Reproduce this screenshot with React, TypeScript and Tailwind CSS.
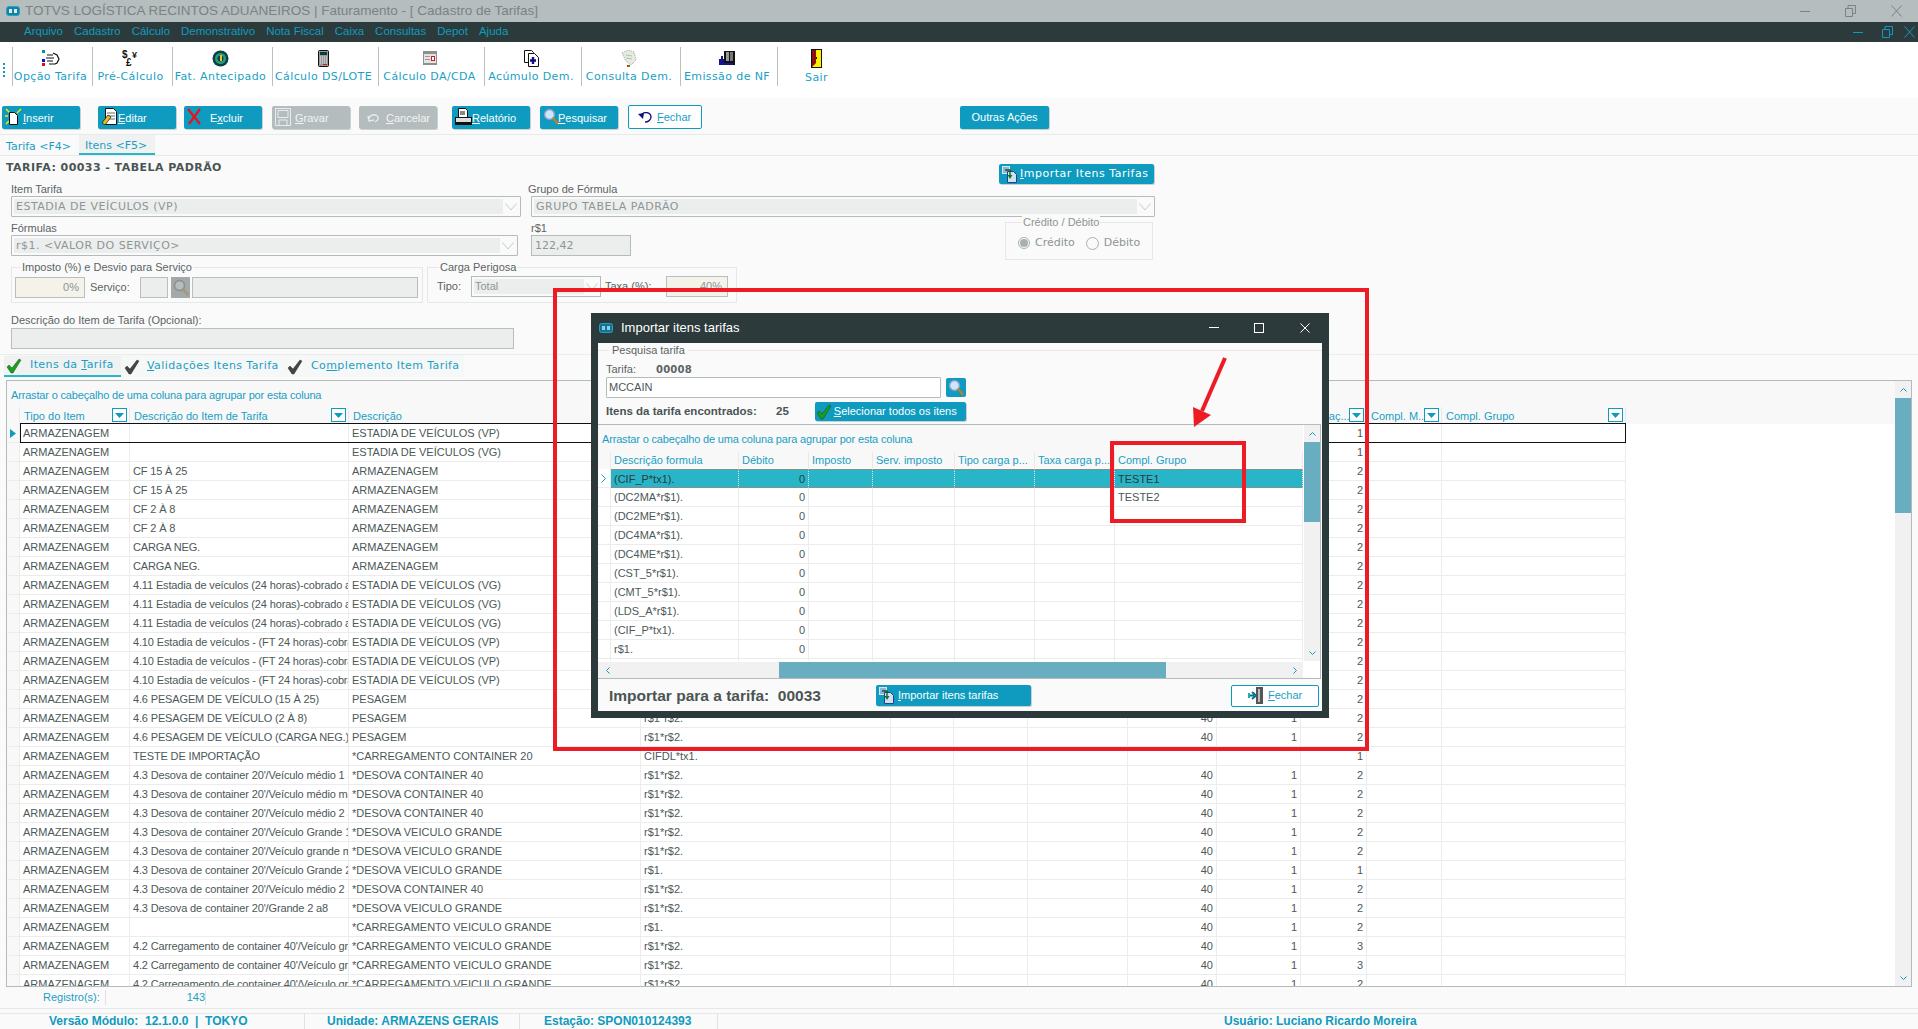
import React from 'react';

const verdana = "font-['DejaVu_Sans',sans-serif]";
const labelText = 'text-[11px] leading-[13px] text-[#5b6464] whitespace-nowrap';

const mainCols =
  'grid grid-cols-[13px_110px_219px_292px_250px_63px_74px_100px_89px_84px_66px_75px_184px]';
const modalCols = 'grid grid-cols-[13px_128px_70px_64px_82px_80px_80px_188px]';

type Row = [string, string, string, string, string, string];

// values under the dialog are not visible in the screen, so those cells stay empty
const rows: Row[] = [
  ['', 'ESTADIA DE VEÍCULOS (VP)', '', '', '', '1'],
  ['', 'ESTADIA DE VEÍCULOS (VG)', '', '', '', '1'],
  ['CF 15 À 25', 'ARMAZENAGEM', '', '', '', '2'],
  ['CF 15 À 25', 'ARMAZENAGEM', '', '', '', '2'],
  ['CF 2 À 8', 'ARMAZENAGEM', '', '', '', '2'],
  ['CF 2 À 8', 'ARMAZENAGEM', '', '', '', '2'],
  ['CARGA NEG.', 'ARMAZENAGEM', '', '', '', '2'],
  ['CARGA NEG.', 'ARMAZENAGEM', '', '', '', '2'],
  ['4.11 Estadia de veículos (24 horas)-cobrado a cada', 'ESTADIA DE VEÍCULOS (VG)', '', '', '', '2'],
  ['4.11 Estadia de veículos (24 horas)-cobrado a cada', 'ESTADIA DE VEÍCULOS (VG)', '', '', '', '2'],
  ['4.11 Estadia de veículos (24 horas)-cobrado a cada', 'ESTADIA DE VEÍCULOS (VG)', '', '', '', '2'],
  ['4.10 Estadia de veículos - (FT 24 horas)-cobrado a', 'ESTADIA DE VEÍCULOS (VP)', '', '', '', '2'],
  ['4.10 Estadia de veículos - (FT 24 horas)-cobrado a', 'ESTADIA DE VEÍCULOS (VP)', '', '', '', '2'],
  ['4.10 Estadia de veículos - (FT 24 horas)-cobrado a', 'ESTADIA DE VEÍCULOS (VP)', '', '', '', '2'],
  ['4.6 PESAGEM DE VEÍCULO (15 À 25)', 'PESAGEM', '', '', '', '2'],
  ['4.6 PESAGEM DE VEÍCULO (2 À 8)', 'PESAGEM', 'r$1*r$2.', '40', '1', '2'],
  ['4.6 PESAGEM DE VEÍCULO (CARGA NEG.)', 'PESAGEM', 'r$1*r$2.', '40', '1', '2'],
  ['TESTE DE IMPORTAÇÃO', '*CARREGAMENTO CONTAINER 20', 'CIFDL*tx1.', '', '', '1'],
  ["4.3 Desova de container 20'/Veículo médio 1 a 8", '*DESOVA CONTAINER 40', 'r$1*r$2.', '40', '1', '2'],
  ["4.3 Desova de container 20'/Veículo médio maior", '*DESOVA CONTAINER 40', 'r$1*r$2.', '40', '1', '2'],
  ["4.3 Desova de container 20'/Veículo médio 2 a 8", '*DESOVA CONTAINER 40', 'r$1*r$2.', '40', '1', '2'],
  ["4.3 Desova de container 20'/Veículo Grande 1 a 8", '*DESOVA VEICULO GRANDE', 'r$1*r$2.', '40', '1', '2'],
  ["4.3 Desova de container 20'/Veículo grande maior", '*DESOVA VEICULO GRANDE', 'r$1*r$2.', '40', '1', '2'],
  ["4.3 Desova de container 20'/Veículo Grande 2 a 8", '*DESOVA VEICULO GRANDE', 'r$1.', '40', '1', '1'],
  ["4.3 Desova de container 20'/Veículo médio 2 a 8", '*DESOVA CONTAINER 40', 'r$1*r$2.', '40', '1', '2'],
  ["4.3 Desova de container 20'/Grande 2 a8", '*DESOVA VEICULO GRANDE', 'r$1*r$2.', '40', '1', '2'],
  ['', '*CARREGAMENTO VEICULO GRANDE', 'r$1.', '40', '1', '2'],
  ["4.2 Carregamento de container 40'/Veículo grande", '*CARREGAMENTO VEICULO GRANDE', 'r$1*r$2.', '40', '1', '3'],
  ["4.2 Carregamento de container 40'/Veículo grande", '*CARREGAMENTO VEICULO GRANDE', 'r$1*r$2.', '40', '1', '3'],
  ["4.2 Carregamento de container 40'/Veículo grande", '*CARREGAMENTO VEICULO GRANDE', 'r$1*r$2.', '40', '1', '2'],
];

const modalRows = [
  ['(CIF_P*tx1).', 'TESTE1'],
  ['(DC2MA*r$1).', 'TESTE2'],
  ['(DC2ME*r$1).', ''],
  ['(DC4MA*r$1).', ''],
  ['(DC4ME*r$1).', ''],
  ['(CST_5*r$1).', ''],
  ['(CMT_5*r$1).', ''],
  ['(LDS_A*r$1).', ''],
  ['(CIF_P*tx1).', ''],
  ['r$1.', ''],
  ['', ''],
];

function Underlined({ before = '', letter, after }: { before?: string; letter: string; after: string }) {
  return (
    <span className="whitespace-nowrap">
      {before}
      <span className="underline">{letter}</span>
      {after}
    </span>
  );
}

function HandIcon() {
  return (
    <svg width="18" height="16" viewBox="0 0 18 16">
      <rect x="0" y="0" width="3" height="3" fill="#0f8f8f" />
      <rect x="0" y="9" width="3" height="3" fill="#1010e0" />
      <rect x="0" y="13" width="3" height="3" fill="#e01010" />
      <path d="M5 5h6M4 8h8M5 11h6M7 14h6M11 3l4 2 2 4-2 4-2 1" fill="none" stroke="#111" strokeWidth="1.2" />
    </svg>
  );
}

function CurrencyIcon() {
  return (
    <svg width="17" height="17" viewBox="0 0 17 17">
      <text x="0" y="8" fontSize="10" fontWeight="700" fontFamily="Liberation Sans" fill="#111">$</text>
      <text x="10" y="8" fontSize="9" fontWeight="700" fontFamily="Liberation Sans" fill="#111">¥</text>
      <text x="4" y="16" fontSize="10" fontWeight="700" fontFamily="Liberation Sans" fill="#111">£</text>
    </svg>
  );
}

function DiscIcon() {
  return (
    <svg width="17" height="17" viewBox="0 0 17 17">
      <circle cx="8.5" cy="8.5" r="8" fill="#0c3f4a" />
      <circle cx="8.5" cy="8.5" r="5.5" fill="#2a9d70" />
      <circle cx="8.5" cy="8.5" r="3" fill="#0c3f4a" />
      <rect x="8" y="5" width="2" height="6" fill="#e8c23a" />
    </svg>
  );
}

function CalculatorIcon() {
  return (
    <svg width="11" height="17" viewBox="0 0 11 17">
      <rect x="0.5" y="0.5" width="10" height="16" rx="1" fill="#9a9a9a" stroke="#111" />
      <rect x="2" y="2" width="7" height="3" fill="#0b3a40" />
      <path d="M2 7h7M2 9h7M2 11h7M2 13h7" stroke="#e6e6e6" strokeDasharray="1 1" />
      <rect x="5" y="14" width="4" height="1" fill="#d02020" />
    </svg>
  );
}

function WindowIcon() {
  return (
    <svg width="14" height="14" viewBox="0 0 14 14">
      <rect x="0" y="0" width="14" height="14" fill="#8f8f8f" />
      <rect x="1" y="3" width="12" height="9" fill="#e4e4e4" />
      <rect x="2" y="5" width="5" height="1" fill="#9a9a9a" />
      <rect x="2" y="8" width="5" height="1" fill="#9a9a9a" />
      <rect x="8" y="5" width="4" height="5" fill="#d81818" />
      <rect x="9" y="6" width="2" height="3" fill="#fff" />
    </svg>
  );
}

function DocsPlusIcon() {
  return (
    <svg width="15" height="17" viewBox="0 0 15 17">
      <path d="M0.5 0.5h7l2 2v10h-9z" fill="#fff" stroke="#111" />
      <path d="M4.5 3.5h6l4 4v9h-10z" fill="#fff" stroke="#111" />
      <path d="M9 7v7M6 10.5h6" stroke="#101080" strokeWidth="2.4" />
    </svg>
  );
}

function NotesIcon() {
  return (
    <svg width="16" height="17" viewBox="0 0 16 17">
      <path d="M1 3l6-3 6 2 2 8-5 5-5-4z" fill="#e7ece2" stroke="#9aa39a" strokeDasharray="1 1" />
      <path d="M5 5l6 1M5 8l6 1" stroke="#a9c4a9" />
      <rect x="6" y="15" width="3" height="2" fill="#a05a10" />
    </svg>
  );
}

function TruckIcon() {
  return (
    <svg width="16" height="15" viewBox="0 0 16 15">
      <rect x="5" y="0" width="11" height="14" fill="#111" />
      <rect x="7" y="1" width="3" height="9" fill="#9a9a9a" />
      <rect x="11" y="1" width="3" height="9" fill="#777" />
      <rect x="0" y="8" width="5" height="6" fill="#14148c" />
      <rect x="2" y="5" width="2" height="4" fill="#14148c" />
      <rect x="5" y="12" width="9" height="2" fill="#14148c" />
    </svg>
  );
}

function DoorIcon() {
  return (
    <svg width="11" height="19" viewBox="0 0 11 19">
      <rect x="0.5" y="0.5" width="10" height="18" fill="#ffee00" stroke="#111" />
      <path d="M1 1h4v13l-4 4z" fill="#8a1010" />
      <rect x="5" y="8" width="1" height="2" fill="#111" />
    </svg>
  );
}

function ImportIcon() {
  return (
    <svg width="16" height="17" viewBox="0 0 16 17">
      <rect x="0.500" y="0.500" width="7" height="7" fill="#8fb4dc" stroke="#d8e6f4" />
      <path d="M5.500 5.500h6l3 3v8h-9z" fill="#cfe0f2" stroke="#27408b" />
      <path d="M3 4h5v6" fill="none" stroke="#0d5c1a" strokeWidth="1.300" />
      <path d="M5.500 9h5l-2.500 4z" fill="#0d7a20" />
    </svg>
  );
}

function CheckIcon({ color, size = 16 }: { color: string; size?: number }) {
  return (
    <svg width={size} height={size} viewBox="0 0 16 16">
      <path d="M1 9l2-2 3 3 7-9 2 1-8 13h-2z" fill={color} stroke="#222" strokeWidth="0.4" />
    </svg>
  );
}

function SearchGlass({ faded = false }: { faded?: boolean }) {
  return (
    <svg width="16" height="17" viewBox="0 0 16 17">
      <circle cx="6.500" cy="6.500" r="5" fill={faded ? '#b7bdbd' : '#cfe6fa'} stroke={faded ? '#8a8f8f' : '#7fa0c0'} strokeWidth="1.500" />
      <path d="M10 10l5 6" stroke={faded ? '#a89a6a' : '#b8812c'} strokeWidth="2.500" />
    </svg>
  );
}

function ExitIcon() {
  return (
    <svg width="17" height="17" viewBox="0 0 17 17">
      <rect x="8" y="0" width="7" height="17" fill="#555" />
      <rect x="10" y="2" width="2" height="13" fill="#bcbcbc" />
      <path d="M1 8.500h5M4 5l4 3.500-4 3.500" fill="none" stroke="#0a6f8a" strokeWidth="2" />
      <rect x="0" y="6" width="2" height="5" fill="#18b0b0" />
    </svg>
  );
}

function ActionButton({
  left,
  width,
  textLeft,
  icon,
  muted,
  children,
}: {
  left: number;
  width: number;
  textLeft: number;
  icon: React.ReactNode;
  muted?: boolean;
  children: React.ReactNode;
}) {
  return (
    <div
      className={`relative h-[23px] flex items-center rounded-[2px] text-[11px] shadow-[1px_1px_0_#c9d0d0] ${
        muted ? 'bg-[#b5bcbd] text-[#f2f4f4]' : 'bg-[#0e9bbf] text-white'
      }`}
      style={{ marginLeft: left, width }}
    >
      <span className="absolute left-[3px] top-[2px]">{icon}</span>
      <span className="absolute top-[4px]" style={{ left: textLeft }}>
        {children}
      </span>
    </div>
  );
}

function ToolItem({ width, icon, label }: { width: number; icon: React.ReactNode; label: string }) {
  return (
    <div className="flex flex-col items-center h-[39px] pr-[4px] border-l border-[#b9c0c0] shrink-0" style={{ width }}>
      <div className="h-[21px] flex items-center justify-center pt-[2px]">{icon}</div>
      <div className={`${verdana} text-[11px] tracking-[0.4px] leading-[19px] text-[#1a9fc4] whitespace-nowrap`}>{label}</div>
    </div>
  );
}

function Chevron() {
  return (
    <svg width="12" height="8" viewBox="0 0 12 8" className="shrink-0">
      <path d="M0.500 0.500L6 7L11.500 0.500" fill="none" stroke="#c5cbcb" />
    </svg>
  );
}

function SelectBox({ text, width }: { text: string; width: string }) {
  return (
    <div className={`${width} h-[21px] flex items-center border border-[#b4bbbb] rounded-[1px] bg-[#fafafa] p-[2px] pr-[3px]`}>
      <div className={`flex-1 h-[15px] bg-[#eceeee] pl-[2px] ${verdana} text-[11px] tracking-[0.5px] leading-[15px] text-[#8d9595] whitespace-nowrap overflow-hidden`}>
        {text}
      </div>
      <span className="ml-[2px]">
        <Chevron />
      </span>
    </div>
  );
}

function FilterButton() {
  return (
    <span className="absolute right-[2px] top-[1px] w-[15px] h-[14px] border border-[#0e9bbf] bg-white flex items-center justify-center">
      <svg width="9" height="5" viewBox="0 0 9 5">
        <path d="M0 0h9L4.500 5z" fill="#0e9bbf" />
      </svg>
    </span>
  );
}

function HeadCell({ text, filter, drop }: { text: string; filter?: boolean; drop?: boolean }) {
  return (
    <div
      className={`relative h-[17px] border-r border-[#e8eaea] text-[11px] leading-[17px] text-[#1a9fc4] whitespace-nowrap overflow-hidden bg-[#f8f8f8] ${
        drop ? 'pl-[4px] pt-px' : 'pl-[3px]'
      }`}
    >
      {text}
      {filter && <FilterButton />}
    </div>
  );
}

function Cell({ text, right, selected, tight }: { text?: string; right?: boolean; selected?: boolean; tight?: boolean }) {
  return (
    <div
      className={`h-[19px] border-r border-[#ececec] px-[3px] text-[11px] leading-[18px] whitespace-nowrap overflow-hidden ${
        right ? 'text-right' : ''
      } ${tight ? 'tracking-[-0.15px]' : ''} ${
        selected ? 'bg-[#29b5c8] text-[#2e3a3c] border-y border-dotted border-y-[#d86a60]' : 'border-b text-[#4d5858]'
      }`}
    >
      {text}
    </div>
  );
}

function VScroll({ thumb, height }: { thumb: string; height: string }) {
  return (
    <div className={`${height} w-[16px] shrink-0 bg-[#f1f1f1] flex flex-col items-center`}>
      <svg width="7" height="4" viewBox="0 0 7 4" className="mt-[7px] mb-[6px] shrink-0">
        <path d="M0.500 3.500L3.500 0.500L6.500 3.500" fill="none" stroke="#0e9bbf" />
      </svg>
      <div className={`${thumb} w-[16px] bg-[#68aec0] shrink-0`} />
      <svg width="7" height="4" viewBox="0 0 7 4" className="mt-auto mb-[6px] shrink-0">
        <path d="M0.500 0.500L3.500 3.500L6.500 0.500" fill="none" stroke="#0e9bbf" />
      </svg>
    </div>
  );
}

function ImportModal() {
  return (
    <div className="absolute left-[591px] top-[313px] w-[738px] h-[405px] bg-[#2d3a3c] flex flex-col">
      <div className="h-[30px] flex items-center shrink-0 pl-[8px]">
        <svg width="14" height="10" viewBox="0 0 14 10">
          <rect x="0.500" y="0.500" width="13" height="9" rx="2" fill="#1d6f8c" stroke="#1aa5cf" />
          <rect x="3" y="3" width="3" height="4" fill="#7fd4ee" />
          <rect x="8" y="3" width="3" height="4" fill="#7fd4ee" />
        </svg>
        <span className="ml-[8px] text-[13px] text-white whitespace-nowrap">Importar itens tarifas</span>
        <svg width="10" height="2" viewBox="0 0 10 2" className="ml-[469px]">
          <rect width="10" height="1" fill="#fff" />
        </svg>
        <span className="ml-[35px] w-[10px] h-[10px] border border-white" />
        <svg width="10" height="10" viewBox="0 0 10 10" className="ml-[36px]">
          <path d="M0.500 0.500l9 9M9.500 0.500l-9 9" stroke="#fff" />
        </svg>
      </div>
      <div className="mx-[7px] w-[724px] h-[368px] bg-[#fafafa] flex flex-col">
        {/* Pesquisa tarifa */}
        <div className="h-[15px] flex items-center shrink-0">
          <span className="w-[11px] h-px bg-[#e6e8e8]" />
          <span className="px-[3px] text-[11px] text-[#5b6464] whitespace-nowrap">Pesquisa tarifa</span>
          <span className="flex-1 h-px bg-[#e6e8e8]" />
        </div>
        <div className="mt-[3px] h-[16px] pl-[8px] flex items-center text-[11px] text-[#5b6464] shrink-0">
          <span className="w-[50px]">Tarifa:</span>
          <span className={`${verdana} font-bold text-[10px] tracking-[0.2px]`}>00008</span>
        </div>
        <div className="pl-[8px] flex shrink-0">
          <div className="w-[335px] h-[21px] border border-[#b4bbbb] rounded-[1px] bg-white pl-[2px] text-[11px] leading-[19px] text-[#4d5858]">
            MCCAIN
          </div>
          <div className="ml-[5px] mt-px w-[20px] h-[19px] rounded-[2px] bg-[#0e9bbf] flex items-center justify-center">
            <SearchGlass />
          </div>
        </div>
        <div className="mt-[4px] h-[19px] pl-[8px] flex items-center shrink-0">
          <span className="w-[170px] font-bold text-[11.500px] text-[#4a5454] whitespace-nowrap">
            Itens da tarifa encontrados:
          </span>
          <span className="font-bold text-[11.500px] text-[#4a5454]">25</span>
          <div className="ml-[26px] w-[151px] h-[19px] rounded-[2px] bg-[#0e9bbf] shadow-[1px_1px_0_#c9d0d0] text-[11px] text-white flex items-center pl-px">
            <CheckIcon color="#16a016" />
            <span className="ml-[2px]">
              <Underlined letter="S" after="elecionar todos os itens" />
            </span>
          </div>
        </div>
        {/* grid */}
        <div className="mt-[3px] w-[723px] h-[255px] border-y border-r border-[#b4bbbb] bg-white flex flex-col shrink-0">
          <div className="flex h-[236px] shrink-0">
            <div className="w-[705px] flex flex-col overflow-hidden shrink-0">
              <div className="h-[27px] shrink-0 bg-[#f8f8f8] pl-[4px] pt-[8px] text-[11px] tracking-[-0.17px] leading-[13px] text-[#1a9fc4] whitespace-nowrap">
                Arrastar o cabeçalho de uma coluna para agrupar por esta coluna
              </div>
              <div className={`${modalCols} shrink-0`}>
                <HeadCell text="" />
                <HeadCell text="Descrição formula" />
                <HeadCell text="Débito" />
                <HeadCell text="Imposto" />
                <HeadCell text="Serv. imposto" />
                <HeadCell text="Tipo carga p..." />
                <HeadCell text="Taxa carga p..." />
                <HeadCell text="Compl. Grupo" />
              </div>
              {modalRows.map((row, i) => (
                <div key={i} className={`${modalCols} shrink-0`}>
                  <div className="h-[19px] border-r border-b border-[#ececec] flex items-center pl-[3px]">
                    {i === 0 && (
                      <svg width="5" height="9" viewBox="0 0 5 9">
                        <path d="M0.500 0.500L4.500 4.500L0.500 8.500" fill="none" stroke="#0e9bbf" />
                      </svg>
                    )}
                  </div>
                  <Cell text={row[0]} selected={i === 0} />
                  <Cell text={row[0] ? '0' : ''} right selected={i === 0} />
                  <Cell selected={i === 0} />
                  <Cell selected={i === 0} />
                  <Cell selected={i === 0} />
                  <Cell selected={i === 0} />
                  <Cell text={row[1]} selected={i === 0} />
                </div>
              ))}
            </div>
            <div className="ml-px">
              <VScroll height="h-[236px]" thumb="h-[80px]" />
            </div>
          </div>
          <div className="mt-px h-[16px] w-[705px] bg-[#f1f1f1] flex items-center shrink-0">
            <svg width="4" height="7" viewBox="0 0 4 7" className="ml-[8px] shrink-0">
              <path d="M3.500 0.500L0.500 3.500L3.500 6.500" fill="none" stroke="#0e9bbf" />
            </svg>
            <div className="ml-[169px] w-[387px] h-[16px] bg-[#68aec0] shrink-0" />
            <svg width="4" height="7" viewBox="0 0 4 7" className="ml-[127px] shrink-0">
              <path d="M0.500 0.500L3.500 3.500L0.500 6.500" fill="none" stroke="#0e9bbf" />
            </svg>
          </div>
        </div>
        {/* footer */}
        <div className="flex-1 flex items-center pl-[11px] pt-px">
          <span className="w-[267px] font-bold text-[15.500px] text-[#4a5454] whitespace-nowrap">
            Importar para a tarifa:&nbsp; 00033
          </span>
          <div className="w-[155px] h-[21px] rounded-[2px] bg-[#0e9bbf] shadow-[1px_1px_0_#c9d0d0] flex items-center pl-[3px] text-[11px] text-white">
            <ImportIcon />
            <span className="ml-[3px]">
              <Underlined letter="I" after="mportar itens tarifas" />
            </span>
          </div>
          <div className="ml-[200px] w-[88px] h-[22px] rounded-[2px] border border-[#0e9bbf] bg-white flex items-center pl-[16px] text-[11px] text-[#1a9fc4]">
            <ExitIcon />
            <span className="ml-[3px]">
              <Underlined letter="F" after="echar" />
            </span>
          </div>
        </div>
      </div>
    </div>
  );
}

export default function App() {
  return (
    <div className="relative w-[1918px] h-[1029px] overflow-hidden bg-[#fafafa] flex flex-col font-['Liberation_Sans',sans-serif]">
      {/* Title bar */}
      <div className="h-[22px] bg-[#b5bdbe] flex items-center shrink-0 pl-[6px]">
        <svg width="14" height="10" viewBox="0 0 14 10">
          <rect x="0.500" y="0.500" width="13" height="9" rx="2.500" fill="#1d7f9c" stroke="#1aa5cf" />
          <rect x="3" y="3" width="3" height="4" fill="#d6eef5" />
          <rect x="8" y="3" width="3" height="4" fill="#d6eef5" />
        </svg>
        <span className="ml-[5px] text-[13.500px] text-[#7b8383] whitespace-nowrap">
          TOTVS LOGÍSTICA RECINTOS ADUANEIROS | Faturamento - [ Cadastro de Tarifas]
        </span>
        <span className="ml-auto w-[10px] h-px bg-[#7b8383]" />
        <svg width="11" height="12" viewBox="0 0 11 12" className="ml-[35px]">
          <path d="M0.500 3.500h7v8h-7zM3 3.500v-3h7.500v8h-3" fill="none" stroke="#7b8383" />
        </svg>
        <svg width="11" height="12" viewBox="0 0 11 12" className="ml-[35px] mr-[16px]">
          <path d="M0.500 0.500l10 11M10.500 0.500l-10 11" stroke="#7b8383" />
        </svg>
      </div>

      {/* Menu bar */}
      <div className="h-[20px] bg-[#2d3a3c] flex items-center shrink-0 pl-[24px] text-[11.500px] text-[#0e9bbf] gap-[11px]">
        <span>Arquivo</span>
        <span>Cadastro</span>
        <span>Cálculo</span>
        <span>Demonstrativo</span>
        <span>Nota Fiscal</span>
        <span>Caixa</span>
        <span>Consultas</span>
        <span>Depot</span>
        <span>Ajuda</span>
        <span className="ml-auto w-[10px] h-px bg-[#0e9bbf]" />
        <svg width="11" height="12" viewBox="0 0 11 12" className="ml-[8px]">
          <path d="M0.500 3.500h7v8h-7zM3 3.500v-3h7.500v8h-3" fill="none" stroke="#0e9bbf" />
        </svg>
        <svg width="11" height="12" viewBox="0 0 11 12" className="mr-[3px]">
          <path d="M0.500 0.500l10 11M10.500 0.500l-10 11" stroke="#0e9bbf" />
        </svg>
      </div>

      {/* Toolbar */}
      <div className="h-[56px] bg-white flex shrink-0 pt-[5px]">
        <div className="w-[12px] pl-[3px] pt-[16px] shrink-0">
          <div className="w-[2px] h-[14px] border-l-2 border-dotted border-[#0e9bbf]" />
        </div>
        <ToolItem width={80} icon={<HandIcon />} label="Opção Tarifa" />
        <ToolItem width={80} icon={<CurrencyIcon />} label="Pré-Cálculo" />
        <ToolItem width={100} icon={<DiscIcon />} label="Fat. Antecipado" />
        <ToolItem width={106} icon={<CalculatorIcon />} label="Cálculo DS/LOTE" />
        <ToolItem width={106} icon={<WindowIcon />} label="Cálculo DA/CDA" />
        <ToolItem width={97} icon={<DocsPlusIcon />} label="Acúmulo Dem." />
        <ToolItem width={99} icon={<NotesIcon />} label="Consulta Dem." />
        <ToolItem width={97} icon={<TruckIcon />} label="Emissão de NF" />
        <ToolItem width={82} icon={<DoorIcon />} label="Sair" />
      </div>

      {/* Action buttons */}
      <div className="h-[37px] border-b border-[#e8eaea] flex pt-[8px] shrink-0">
        <ActionButton left={2} width={78} textLeft={21} icon={
          <svg width="17" height="18" viewBox="0 0 17 18">
            <path d="M1 1l4 4M16 1l-4 4M1 16l3-3M0 8h3" stroke="#ffe600" strokeWidth="1.500" />
            <path d="M4.500 4.500h5l3 3v9h-8z" fill="#fff" stroke="#111" />
          </svg>
        }>
          <Underlined letter="I" after="nserir" />
        </ActionButton>
        <ActionButton left={18} width={78} textLeft={20} icon={
          <svg width="17" height="18" viewBox="0 0 17 18">
            <path d="M4.500 0.500h8l3 3v13h-11z" fill="#fff" stroke="#111" />
            <path d="M6 5h8M6 8h8M6 11h8" stroke="#666" />
            <path d="M1 15l6-8 3 2-6 8z" fill="#e8c21a" stroke="#111" strokeWidth="0.700" />
          </svg>
        }>
          <Underlined letter="E" after="ditar" />
        </ActionButton>
        <ActionButton left={8} width={78} textLeft={26} icon={
          <svg width="15" height="18" viewBox="0 0 15 18">
            <path d="M1 1l12 15M13 1L2 16" stroke="#e5141c" strokeWidth="2.200" />
          </svg>
        }>
          <Underlined before="E" letter="x" after="cluir" />
        </ActionButton>
        <ActionButton left={10} width={78} muted textLeft={23} icon={
          <svg width="16" height="18" viewBox="0 0 16 18">
            <path d="M0.500 0.500h15v17h-15z" fill="none" stroke="#e8ecec" />
            <path d="M3 2.500h10v7H3zM4 17v-5h8v5" fill="none" stroke="#e8ecec" />
          </svg>
        }>
          <Underlined letter="G" after="ravar" />
        </ActionButton>
        <ActionButton left={9} width={78} muted textLeft={27} icon={
          <svg width="18" height="18" viewBox="0 0 18 18">
            <path d="M5 12c0-4 7-6 9-2 1 3-1 4-3 5M4 9l1 5 5-1" fill="none" stroke="#e8ecec" strokeWidth="1.300" transform="translate(2 -1)" />
          </svg>
        }>
          <Underlined letter="C" after="ancelar" />
        </ActionButton>
        <ActionButton left={15} width={78} textLeft={20} icon={
          <svg width="17" height="18" viewBox="0 0 17 18">
            <path d="M3.500 0.500h7l2 2v7h-9z" fill="#fff" stroke="#111" />
            <path d="M5 4h5M5 6h5" stroke="#111" />
            <rect x="0.500" y="9.500" width="16" height="5" fill="#ddd" stroke="#111" />
            <rect x="0" y="15" width="17" height="2" fill="#111" />
          </svg>
        }>
          <Underlined letter="R" after="elatório" />
        </ActionButton>
        <ActionButton left={10} width={78} textLeft={18} icon={<SearchGlass />}>
          <Underlined letter="P" after="esquisar" />
        </ActionButton>
        <div className="ml-[10px] w-[74px] h-[24px] -mt-px rounded-[2px] border border-[#0e9bbf] bg-white flex items-center pl-[9px] text-[11px] text-[#1a9fc4]">
          <svg width="15" height="11" viewBox="0 0 15 11">
            <path d="M4 2c4-3 9-1 9 3 0 3-3 5-6 5" fill="none" stroke="#101080" strokeWidth="1.300" />
            <path d="M0 2l6-1-1 6z" fill="#101080" />
          </svg>
          <span className="ml-[4px]">
            <Underlined letter="F" after="echar" />
          </span>
        </div>
        <div className="ml-[258px] w-[89px] h-[23px] rounded-[2px] bg-[#0e9bbf] shadow-[1px_1px_0_#c9d0d0] flex items-center justify-center text-[11px] text-white">
          Outras Ações
        </div>
      </div>

      {/* Page tabs */}
      <div className={`h-[21px] border-b border-[#e8eaea] flex shrink-0 ${verdana} text-[11px] text-[#1a9fc4]`}>
        <div className="w-[79px] pl-[6px] pt-px leading-[22px]">Tarifa &lt;F4&gt;</div>
        <div className="w-[76px] bg-[#f0f1f1] border-b-2 border-[#2bb5c8] pl-[6px] pt-px leading-[19px]">Itens &lt;F5&gt;</div>
      </div>

      {/* Form */}
      <div className="h-[199px] border-b border-[#ececec] shrink-0 flex flex-col">
        <div className="h-[27px] w-[1154px] flex justify-between items-start pt-[8px] pl-[6px] shrink-0">
          <span className={`${verdana} mt-px font-bold text-[11px] tracking-[0.45px] leading-[6px] text-[#4a5454]`}>
            TARIFA: 00033 - TABELA PADRÃO
          </span>
          <div className={`h-[20px] w-[155px] rounded-[2px] bg-[#0e9bbf] shadow-[1px_1px_0_#c9d0d0] flex items-center pl-[3px] ${verdana} text-[11px] tracking-[0.5px] text-white`}>
            <ImportIcon />
            <span className="ml-[2px] pt-px">
              <Underlined letter="I" after="mportar Itens Tarifas" />
            </span>
          </div>
        </div>
        <div className="flex shrink-0">
          <div className="ml-[11px] w-[510px]">
            <div className={labelText}>Item Tarifa</div>
            <SelectBox width="w-[510px]" text="ESTADIA DE VEÍCULOS (VP)" />
          </div>
          <div className="ml-[10px] w-[624px]">
            <div className={`${labelText} -ml-[3px]`}>Grupo de Fórmula</div>
            <SelectBox width="w-[624px]" text="GRUPO TABELA PADRÃO" />
          </div>
        </div>
        <div className="flex mt-[5px] shrink-0">
          <div className="ml-[11px] w-[507px]">
            <div className={labelText}>Fórmulas</div>
            <SelectBox width="w-[507px]" text="r$1. <VALOR DO SERVIÇO>" />
          </div>
          <div className="ml-[13px] w-[100px]">
            <div className={labelText}>r$1</div>
            <div className={`h-[21px] border border-[#b4bbbb] bg-[#eceeee] pl-[3px] ${verdana} text-[11px] leading-[19px] text-[#8d9595]`}>
              122,42
            </div>
          </div>
          <div className="relative ml-[374px] -mb-[4px] w-[148px] h-[38px] border border-[#e6e8e8] flex items-center text-[11px] text-[#8d9595]">
            <span className="absolute left-[16px] -top-[7px] bg-[#fafafa] px-px leading-[13px] whitespace-nowrap">Crédito / Débito</span>
            <span className="ml-[12px] mt-[4px] w-[12px] h-[12px] rounded-full border border-[#a9b0b0] flex items-center justify-center">
              <span className="w-[8px] h-[8px] rounded-full bg-[#a9b0b0]" />
            </span>
            <span className={`ml-[5px] mt-[4px] ${verdana}`}>Crédito</span>
            <span className="ml-[11px] mt-[4px] w-[13px] h-[13px] rounded-full border border-[#a9b0b0]" />
            <span className={`ml-[5px] mt-[4px] ${verdana}`}>Débito</span>
          </div>
        </div>
        <div className="flex mt-[11px] shrink-0">
          <div className="relative ml-[11px] w-[412px] h-[36px] border border-[#e6e8e8] flex pt-[9px] pl-[3px]">
            <span className={`absolute left-[9px] -top-[7px] bg-[#fafafa] px-px ${labelText}`}>Imposto (%) e Desvio para Serviço</span>
            <div className="w-[70px] h-[21px] border border-[#b9bfbf] bg-[#f5f2ea] text-right pr-[5px] text-[11px] leading-[19px] text-[#8d9595]">0%</div>
            <span className={`ml-[5px] w-[50px] leading-[21px] ${labelText}`}>Serviço:</span>
            <div className="w-[28px] h-[21px] border border-[#b9bfbf] bg-[#eceeee]" />
            <div className="ml-[3px] w-[19px] h-[21px] bg-[#a3a8a8] flex items-center justify-center">
              <SearchGlass faded />
            </div>
            <div className="ml-[2px] w-[226px] h-[21px] border border-[#b9bfbf] bg-[#eceeee]" />
          </div>
          <div className="relative ml-[4px] w-[310px] h-[36px] border border-[#e6e8e8] flex pt-[8px] pl-[9px]">
            <span className={`absolute left-[11px] -top-[7px] bg-[#fafafa] px-px ${labelText}`}>Carga Perigosa</span>
            <span className={`w-[34px] leading-[21px] ${labelText}`}>Tipo:</span>
            <div className="w-[130px] h-[21px] flex items-center border border-[#b4bbbb] bg-[#fafafa] p-[2px]">
              <div className="flex-1 h-[15px] bg-[#eceeee] pl-[1px] text-[11px] leading-[15px] text-[#8d9595]">Total</div>
              <span className="ml-[2px]">
                <Chevron />
              </span>
            </div>
            <span className={`ml-[4px] w-[61px] leading-[21px] ${labelText}`}>Taxa (%):</span>
            <div className="w-[62px] h-[21px] border border-[#b9bfbf] bg-[#f5f2ea] text-right pr-[5px] text-[11px] leading-[19px] text-[#8d9595]">40%</div>
          </div>
        </div>
        <div className="mt-[11px] ml-[11px] shrink-0">
          <div className={`${labelText} mb-px`}>Descrição do Item de Tarifa (Opcional):</div>
          <div className="w-[503px] h-[21px] border border-[#b9bfbf] bg-[#eceeee]" />
        </div>
      </div>

      {/* Grid tabs */}
      <div className={`h-[22px] ml-[4px] w-[460px] pt-px bg-[#f6f7f7] flex shrink-0 ${verdana} text-[11px] tracking-[0.4px] text-[#1a9fc4]`}>
        <div className="w-[117px] bg-[#f0f1f1] border-b-2 border-[#2bb5c8] flex items-center pl-[2px]">
          <CheckIcon color="#17a317" />
          <span className="ml-[8px]">
            Itens da <Underlined letter="T" after="arifa" />
          </span>
        </div>
        <div className="flex items-center ml-[3px] w-[163px]">
          <CheckIcon color="#444" />
          <span className="ml-[7px]">
            <Underlined letter="V" after="alidações Itens Tarifa" />
          </span>
        </div>
        <div className="flex items-center">
          <CheckIcon color="#444" />
          <span className="ml-[8px]">
            Co<Underlined letter="m" after="plemento Item Tarifa" />
          </span>
        </div>
      </div>

      {/* Main grid */}
      <div className="mt-[3px] ml-[6px] w-[1906px] h-[607px] border border-[#b4bbbb] bg-white flex shrink-0 overflow-hidden">
        <div className="w-[1888px] flex flex-col shrink-0">
          <div className="h-[26px] shrink-0 bg-[#f8f8f8] pl-[4px] pt-[8px] text-[11px] tracking-[-0.17px] leading-[13px] text-[#1a9fc4] whitespace-nowrap">
            Arrastar o cabeçalho de uma coluna para agrupar por esta coluna
          </div>
          <div className="flex shrink-0 bg-[#f8f8f8]">
            <div className={`${mainCols} shrink-0`}>
              <HeadCell text="" />
              <HeadCell text="Tipo do Item" filter drop />
              <HeadCell text="Descrição do Item de Tarifa" filter drop />
              <HeadCell text="Descrição" drop />
              <HeadCell text="" />
              <HeadCell text="" />
              <HeadCell text="" />
              <HeadCell text="" />
              <HeadCell text="" />
              <HeadCell text="" />
              <HeadCell text="Aplicaç..." filter drop />
              <HeadCell text="Compl. M..." filter drop />
              <HeadCell text="Compl. Grupo" filter drop />
            </div>
          </div>
          {rows.map((row, i) => (
            <div key={i} className={`${mainCols} relative w-[1619px] shrink-0`}>
              <div className="h-[19px] border-r border-b border-[#ececec] flex items-center pl-[3px] bg-[#f8f8f8]">
                {i === 0 && (
                  <svg width="6" height="9" viewBox="0 0 6 9">
                    <path d="M0 0l6 4.500L0 9z" fill="#0e9bbf" />
                  </svg>
                )}
              </div>
              <Cell text="ARMAZENAGEM" />
              <Cell text={row[0]} tight />
              <Cell text={row[1]} />
              <Cell text={row[2]} />
              <Cell />
              <Cell />
              <Cell />
              <Cell text={row[3]} right />
              <Cell text={row[4]} right />
              <Cell text={row[5]} right />
              <Cell />
              <Cell />
              {i === 0 && <div className="absolute left-[13px] right-0 -top-px bottom-0 border border-[#111]" />}
            </div>
          ))}
        </div>
        <VScroll height="h-[605px]" thumb="h-[115px]" />
      </div>

      {/* Record count */}
      <div className="h-[22px] border-b border-[#e6e8e8] flex items-center shrink-0 text-[11px] text-[#1a9fc4]">
        <span className="ml-[43px] w-[63px] h-[15px] leading-[15px] border-r border-[#e0e3e3]">Registro(s):</span>
        <span className="w-[100px] h-[15px] leading-[15px] text-right border-r border-[#e0e3e3]">143</span>
      </div>

      {/* Status bar */}
      <div className="mt-[4px] flex-1 border-t border-[#e6e8e8] flex items-center font-bold text-[12px] text-[#0e9bbf] whitespace-pre">
        <span className="ml-[49px] w-[256px] border-r border-[#e0e3e3] leading-[15px]">Versão Módulo:  12.1.0.0  |  TOKYO</span>
        <span className="ml-[22px] w-[193px] border-r border-[#e0e3e3] leading-[15px]">Unidade: ARMAZENS GERAIS</span>
        <span className="ml-[24px] w-[174px] border-r border-[#e0e3e3] leading-[15px]">Estação: SPON010124393</span>
        <span className="ml-[506px] leading-[15px]">Usuário: Luciano Ricardo Moreira</span>
      </div>

      {/* Annotation frame + dialog */}
      <div className="absolute left-[553px] top-[288px] w-[816px] h-[463px] border-4 border-[#ed1c24]" />
      <ImportModal />
      <div className="absolute left-[1110px] top-[441px] w-[136px] h-[82px] border-4 border-[#ed1c24]" />
      <svg className="absolute left-[1185px] top-[350px]" width="50" height="85" viewBox="0 0 50 85">
        <path d="M40 8L17 61" stroke="#ed1c24" strokeWidth="4" />
        <path d="M9 77L8 57L26 65z" fill="#ed1c24" />
      </svg>
    </div>
  );
}
